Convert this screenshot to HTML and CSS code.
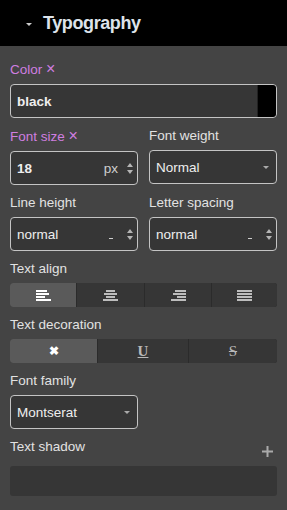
FILE: index.html
```html
<!DOCTYPE html>
<html lang="en">
<head>
    <meta charset="UTF-8">
    <meta name="viewport" content="width=device-width, initial-scale=1.0">
    <title>Typography</title>
    <link rel="stylesheet" href="styles.css">
</head>
<body>
    <div class="panel">
        <div class="panel-header">
            <span class="caret caret-head"></span>
            <h2 class="panel-title">Typography</h2>
        </div>
        <div class="panel-body">
            <div class="field">
                <label class="field-label is-set">Color <span class="clear">×</span></label>
                <div class="input">
                    <span class="input-value bold">black</span>
                    <span class="swatch"></span>
                </div>
            </div>

            <div class="row">
                <div class="field">
                    <label class="field-label is-set">Font size <span class="clear">×</span></label>
                    <div class="input">
                        <span class="input-value bold">18</span>
                        <span class="unit">px</span>
                        <svg class="spinner" width="6" height="11" viewBox="0 0 6 11"><path d="M0 4 L3 0 L6 4 Z M0 7 L3 11 L6 7 Z" fill="#b5b5b5"/></svg>
                    </div>
                </div>
                <div class="field">
                    <label class="field-label">Font weight</label>
                    <div class="input">
                        <span class="input-value">Normal</span>
                        <span class="caret caret-select"></span>
                    </div>
                </div>
            </div>

            <div class="row">
                <div class="field">
                    <label class="field-label">Line height</label>
                    <div class="input">
                        <span class="input-value">normal</span>
                        <span class="dash"></span>
                        <svg class="spinner" width="6" height="11" viewBox="0 0 6 11"><path d="M0 4 L3 0 L6 4 Z M0 7 L3 11 L6 7 Z" fill="#b5b5b5"/></svg>
                    </div>
                </div>
                <div class="field">
                    <label class="field-label">Letter spacing</label>
                    <div class="input">
                        <span class="input-value">normal</span>
                        <span class="dash"></span>
                        <svg class="spinner" width="6" height="11" viewBox="0 0 6 11"><path d="M0 4 L3 0 L6 4 Z M0 7 L3 11 L6 7 Z" fill="#b5b5b5"/></svg>
                    </div>
                </div>
            </div>

            <div class="field">
                <label class="field-label">Text align</label>
                <div class="segments seg-4">
                    <button class="seg active">
                        <svg width="15" height="11" viewBox="0 0 15 11" fill="currentColor"><rect x="0" y="0" width="11" height="2"/><rect x="0" y="3" width="13" height="2"/><rect x="0" y="6" width="9" height="2"/><rect x="0" y="9" width="15" height="2"/></svg>
                    </button>
                    <button class="seg">
                        <svg width="15" height="11" viewBox="0 0 15 11" fill="currentColor"><rect x="3" y="0" width="9" height="2"/><rect x="1" y="3" width="13" height="2"/><rect x="3" y="6" width="9" height="2"/><rect x="0" y="9" width="15" height="2"/></svg>
                    </button>
                    <button class="seg">
                        <svg width="15" height="11" viewBox="0 0 15 11" fill="currentColor"><rect x="4" y="0" width="11" height="2"/><rect x="2" y="3" width="13" height="2"/><rect x="6" y="6" width="9" height="2"/><rect x="0" y="9" width="15" height="2"/></svg>
                    </button>
                    <button class="seg">
                        <svg width="15" height="11" viewBox="0 0 15 11" fill="currentColor"><rect x="0" y="0" width="15" height="2"/><rect x="0" y="3" width="15" height="2"/><rect x="0" y="6" width="15" height="2"/><rect x="0" y="9" width="15" height="2"/></svg>
                    </button>
                </div>
            </div>

            <div class="field">
                <label class="field-label">Text decoration</label>
                <div class="segments seg-3">
                    <button class="seg active"><span class="deco-none">✖</span></button>
                    <button class="seg"><span class="deco-u">U</span></button>
                    <button class="seg"><span class="deco-s">S</span></button>
                </div>
            </div>

            <div class="row">
                <div class="field">
                    <label class="field-label">Font family</label>
                    <div class="input">
                        <span class="input-value">Montserat</span>
                        <span class="caret caret-select"></span>
                    </div>
                </div>
            </div>

            <div class="field">
                <div class="stack-head">
                    <label class="field-label">Text shadow</label>
                    <svg class="add" width="11" height="11" viewBox="0 0 11 11"><path d="M5.5 0 V11 M0 5.5 H11" stroke="#aaa" stroke-width="2"/></svg>
                </div>
                <div class="stack-box"></div>
            </div>
        </div>
    </div>
</body>
</html>
```

FILE: styles.css
```css
body {
    margin: 0;
    padding: 0;
    background-color: #444444;
    font-family: "Liberation Sans", Arial, sans-serif;
    color: #dddddd;
}

.panel {
    width: 287px;
    min-height: 510px;
    background-color: #444444;
}

.panel-header {
    height: 46px;
    background-color: #000000;
    display: flex;
    align-items: center;
    padding-left: 26px;
    box-sizing: border-box;
}

.caret {
    display: inline-block;
    width: 0;
    height: 0;
    border-left: 3px solid transparent;
    border-right: 3px solid transparent;
}

.caret-head {
    border-top: 3px solid #cccccc;
    margin-top: 2px;
}

.panel-title {
    margin: 0 0 0 11px;
    font-size: 18px;
    font-weight: bold;
    letter-spacing: -0.4px;
    color: #dde3ea;
}

.panel-body {
    padding: 15px 10px 10px 10px;
    display: flex;
    flex-direction: column;
    gap: 10px;
}

.row {
    display: grid;
    grid-template-columns: 1fr 1fr;
    gap: 11px;
}

.field {
    display: flex;
    flex-direction: column;
    gap: 6px;
}

.field-label {
    font-size: 13.5px;
    line-height: 16px;
    color: #e2e2e2;
}

.field-label.is-set {
    color: #d07ee0;
}

.clear {
    font-size: 16px;
    font-weight: 300;
    line-height: 16px;
}

.input {
    height: 34px;
    box-sizing: border-box;
    border: 1px solid #c4c4c4;
    border-radius: 4px;
    background-color: #363636;
    display: flex;
    align-items: center;
    padding: 0 4px 0 6px;
    position: relative;
    overflow: hidden;
}

.input-value {
    flex: 1;
    font-size: 13.5px;
    color: #eeeeee;
}

.input-value.bold {
    font-weight: bold;
}

.unit {
    font-size: 13.5px;
    color: #cfcfcf;
    margin-right: 9px;
}

.dash {
    width: 4px;
    height: 1px;
    background-color: #cfcfcf;
    margin: 8px 14px 0 0;
}

.spinner {
    display: block;
}

.caret-select {
    border-top: 3px solid #aaaaaa;
    margin-right: 3px;
}

.swatch {
    position: absolute;
    top: 0;
    right: 0;
    bottom: 0;
    width: 18px;
    background-color: #000000;
    border-left: 1px solid #222222;
    border-radius: 0 3px 3px 0;
}

.segments {
    display: grid;
    height: 24px;
    border-radius: 3px;
    overflow: hidden;
    background-color: #2b2b2b;
    gap: 1px;
}

.seg-4 {
    grid-template-columns: 66px 67px 66px 1fr;
}

.seg-3 {
    grid-template-columns: 87px 90px 1fr;
}

.seg {
    border: none;
    margin: 0;
    padding: 0;
    background-color: #363636;
    color: #bdbdbd;
    display: flex;
    align-items: center;
    justify-content: center;
    font-family: "Liberation Sans", Arial, sans-serif;
}

.seg.active {
    background-color: #5a5a5a;
    color: #ffffff;
}

.deco-none {
    font-size: 12px;
    font-weight: bold;
    line-height: 1;
}

.deco-u,
.deco-s {
    font-family: "Liberation Serif", "Times New Roman", serif;
    font-size: 15px;
    font-weight: bold;
    color: #b8b8b8;
}

.deco-u {
    text-decoration: underline;
}

.deco-s {
    text-decoration: line-through;
    font-weight: normal;
}

.stack-head {
    display: flex;
    justify-content: space-between;
    align-items: flex-start;
}

.add {
    margin: 7px 4px 0 0;
}

.stack-box {
    height: 30px;
    margin-top: 3px;
    background-color: #363636;
    border-radius: 3px;
}
```
